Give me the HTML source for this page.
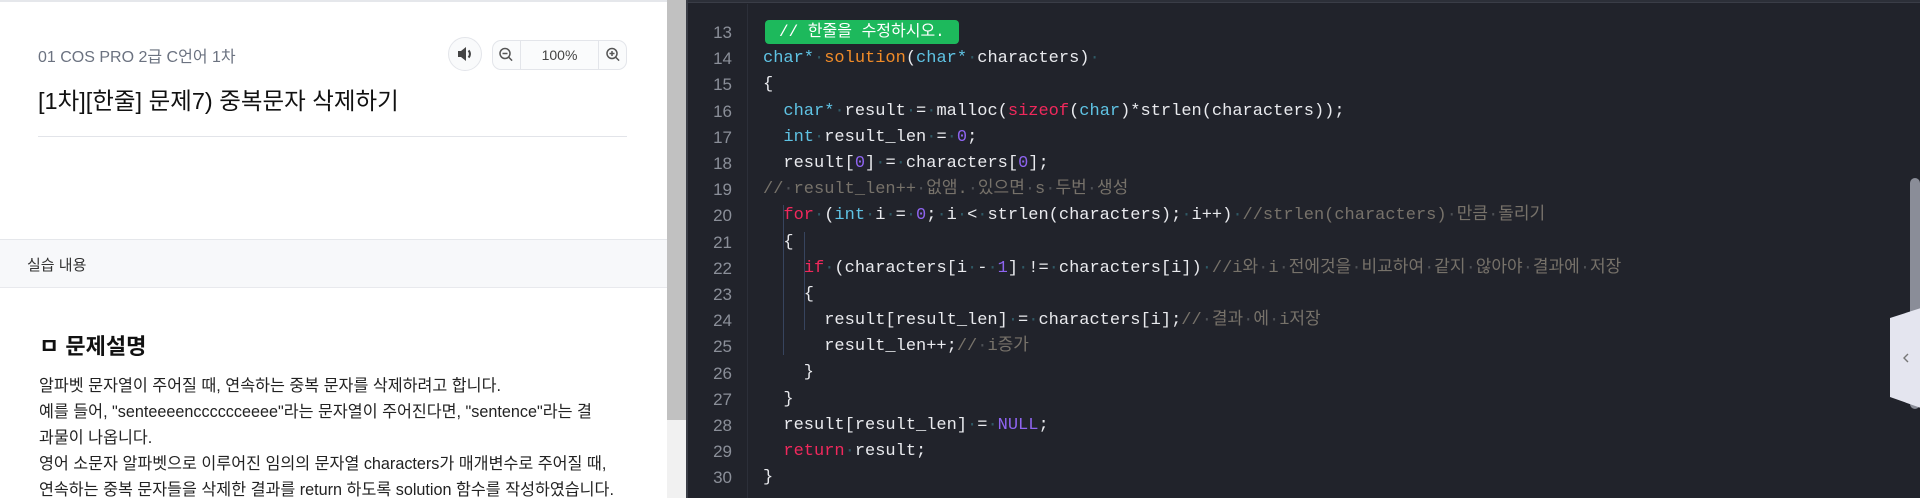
<!DOCTYPE html>
<html><head><meta charset="utf-8"><style>
*{margin:0;padding:0;box-sizing:border-box}
html,body{width:1920px;height:498px;overflow:hidden;background:#fff;font-family:"Liberation Sans","Noto Sans CJK KR",sans-serif}
#left{position:absolute;left:0;top:0;width:667px;height:498px;background:#fff;overflow:hidden}
.topline{position:absolute;left:0;top:0;width:667px;height:2px;background:#e5e7eb}
.crumb{position:absolute;left:38px;top:43px;font-size:16px;color:#6b7280}
.title{position:absolute;left:38px;top:82px;font-size:23.5px;color:#111}
.hr{position:absolute;left:38px;top:136px;width:589px;height:1px;background:#e2e4e9}
.spk{position:absolute;left:448px;top:37px;width:34px;height:34px;border-radius:50%;border:1px solid #e3e5ea;background:#f9fafb}
.zoom{position:absolute;left:492px;top:40px;width:135px;height:30px;border:1px solid #e3e5ea;border-radius:9px;background:#fafbfc}
.zoom .d1{position:absolute;left:27px;top:0;width:1px;height:28px;background:#e3e5ea}
.zoom .d2{position:absolute;left:105px;top:0;width:1px;height:28px;background:#e3e5ea}
.zoom .pct{position:absolute;left:28px;width:77px;top:6px;text-align:center;font-size:14px;color:#444}
.sec{position:absolute;left:0;top:239px;width:667px;height:49px;background:#f7f8fa;border-top:1px solid #e5e7eb;border-bottom:1px solid #e8e9ed}
.sec span{position:absolute;left:27px;top:14px;font-size:15px;color:#333}
.h2{position:absolute;left:39px;top:329px;font-size:22px;font-weight:bold;color:#111}
.p{position:absolute;left:39px;top:373px;width:620px;font-size:16.2px;line-height:26px;color:#222;white-space:nowrap}
#sb{position:absolute;left:667px;top:0;width:19px;height:498px;background:#f1f1f1}
#sb div{position:absolute;left:0;top:0;width:19px;height:420px;background:#c1c1c1}
#ed{position:absolute;left:686px;top:0;width:1234px;height:498px;background:#21232b;border-left:2px solid #3a3d46}
.tb{position:absolute;left:0;top:0;width:100%;height:3px;background:#2c2f38;border-bottom:1px solid #3a3d47}
.gut{position:absolute;left:59px;top:4px;width:1px;height:494px;background:#2c2f39}
.ln{position:absolute;left:0;top:20px;width:44px;text-align:right;font-family:"Liberation Sans",sans-serif;font-size:17px;line-height:26.2px;color:#8b8f99}
.code{position:absolute;left:75px;top:20px;font-family:"Liberation Mono","Noto Sans CJK KR",monospace;font-size:17px;line-height:26.2px;color:#e9eaee;white-space:pre}
.code div{height:26.2px}
.k{color:#5fc3e4}.f{color:#f28c28}.r{color:#f0285c}.n{color:#8e64f0}.c{color:#77726a}
i{font-style:normal;color:#2f5a66}
.c i{color:#4e5156}
.badge{display:inline-block;background:#1db95c;color:#fff;border-radius:4px;height:24px;line-height:24px;padding:0 14px 0 14px;margin-left:2px;font-size:16px}
.g1{position:absolute;left:95px;top:205px;width:1px;height:150px;background:#37445e}
.g2{position:absolute;left:116px;top:232px;width:1px;height:98px;background:#37445e}
.vs{position:absolute;left:1222px;top:178px;width:10px;height:231px;border-radius:5px;background:#8a8d98}
</style></head><body>
<div id="left">
<div class="topline"></div>
<div class="crumb">01 COS PRO 2급 C언어 1차</div>
<div class="title">[1차][한줄] 문제7) 중복문자 삭제하기</div>
<div class="spk"><svg width="32" height="32" viewBox="0 0 32 32" style="position:absolute;left:0;top:0"><path d="M9 13h3l5-4v14l-5-4H9z" fill="#444"/><path d="M19.5 12.5a5 5 0 0 1 0 7" stroke="#444" stroke-width="2" fill="none"/></svg></div>
<div class="zoom"><svg width="27" height="28" viewBox="0 0 27 28" style="position:absolute;left:0;top:0"><circle cx="12" cy="12.5" r="5" stroke="#555" stroke-width="1.5" fill="none"/><path d="M9.5 12.5h5M15.6 16.1l3.5 3.5" stroke="#555" stroke-width="1.5"/></svg><div class="d1"></div><div class="pct">100%</div><div class="d2"></div><svg width="29" height="28" viewBox="0 0 29 28" style="position:absolute;left:106px;top:0"><circle cx="13" cy="12.5" r="5" stroke="#555" stroke-width="1.5" fill="none"/><path d="M10.5 12.5h5M13 10v5M16.6 16.1l3.5 3.5" stroke="#555" stroke-width="1.5"/></svg></div>
<div class="hr"></div>
<div class="sec"><span>실습 내용</span></div>
<div class="h2">ㅁ 문제설명</div>
<div class="p">알파벳 문자열이 주어질 때, 연속하는 중복 문자를 삭제하려고 합니다.<br>예를 들어, "senteeeencccccceeee"라는 문자열이 주어진다면, "sentence"라는 결<br>과물이 나옵니다.<br>영어 소문자 알파벳으로 이루어진 임의의 문자열 characters가 매개변수로 주어질 때,<br>연속하는 중복 문자들을 삭제한 결과를 return 하도록 solution 함수를 작성하였습니다.</div>
</div>
<div id="sb"><div></div></div>
<div id="ed">
<div class="tb"></div>
<div class="gut"></div>
<div class="ln">13<br>14<br>15<br>16<br>17<br>18<br>19<br>20<br>21<br>22<br>23<br>24<br>25<br>26<br>27<br>28<br>29<br>30</div>
<div class="g1"></div><div class="g2"></div>
<div class="code"><div><span class="badge">// 한줄을 수정하시오.</span></div><div><span class="k">char*</span><i>·</i><span class="f">solution</span>(<span class="k">char*</span><i>·</i>characters)<i>·</i></div><div>{</div><div>  <span class="k">char*</span><i>·</i>result<i>·</i>=<i>·</i>malloc(<span class="r">sizeof</span>(<span class="k">char</span>)*strlen(characters));</div><div>  <span class="k">int</span><i>·</i>result_len<i>·</i>=<i>·</i><span class="n">0</span>;</div><div>  result[<span class="n">0</span>]<i>·</i>=<i>·</i>characters[<span class="n">0</span>];</div><div><span class="c">//<i>·</i>result_len++<i>·</i>없앰.<i>·</i>있으면<i>·</i>s<i>·</i>두번<i>·</i>생성</span></div><div>  <span class="r">for</span><i>·</i>(<span class="k">int</span><i>·</i>i<i>·</i>=<i>·</i><span class="n">0</span>;<i>·</i>i<i>·</i>&lt;<i>·</i>strlen(characters);<i>·</i>i++)<i>·</i><span class="c">//strlen(characters)<i>·</i>만큼<i>·</i>돌리기</span></div><div>  {</div><div>    <span class="r">if</span><i>·</i>(characters[i<i>·</i>-<i>·</i><span class="n">1</span>]<i>·</i>!=<i>·</i>characters[i])<i>·</i><span class="c">//i와<i>·</i>i<i>·</i>전에것을<i>·</i>비교하여<i>·</i>같지<i>·</i>않아야<i>·</i>결과에<i>·</i>저장</span></div><div>    {</div><div>      result[result_len]<i>·</i>=<i>·</i>characters[i];<span class="c">//<i>·</i>결과<i>·</i>에<i>·</i>i저장</span></div><div>      result_len++;<span class="c">//<i>·</i>i증가</span></div><div>    }</div><div>  }</div><div>  result[result_len]<i>·</i>=<i>·</i><span class="n">NULL</span>;</div><div>  <span class="r">return</span><i>·</i>result;</div><div>}</div></div>
<div class="vs"></div>
<svg width="34" height="102" viewBox="0 0 34 102" style="position:absolute;left:1200px;top:307px"><polygon points="2,11 33,1 33,101 2,90" fill="#e4e5ef"/><path d="M20 47l-4 4 4 4" stroke="#777" stroke-width="1.4" fill="none"/></svg>
</div>
</body></html>
